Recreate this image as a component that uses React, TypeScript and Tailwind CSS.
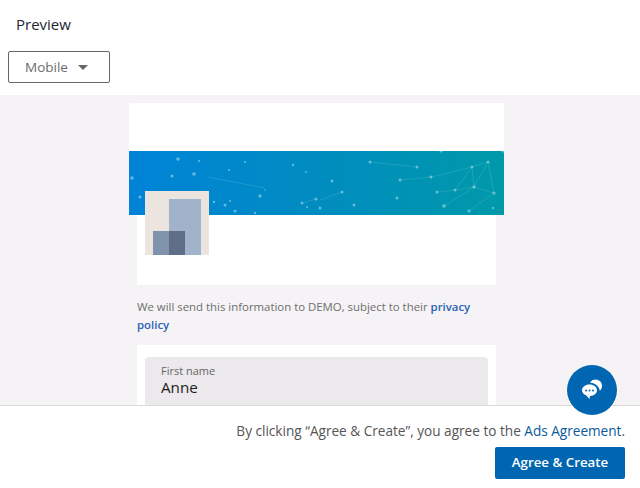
const dots: [number, number, number][] = [
  [3, 27, 1.8], [49, 8, 1.8], [43, 25, 1.6], [65, 23, 1.8], [11, 46, 1.6], [70, 10, 1.1], [116, 11, 1.1], [100, 19, 1.1], [131, 45, 1.7], [85, 51, 1.2],
  [96, 54, 1.5], [101, 50, 1], [106, 60, 1.6], [126, 62, 1.2], [173, 52, 1.5], [187, 48, 1.6], [191, 57, 1.5], [178, 56, 1.1], [164, 14, 1.2], [177, 21, 0.9],
  [136, 39, 0.8], [241, 11, 1.5], [288, 16, 1.5], [271, 29, 1.5], [302, 26, 1.5], [203, 30, 1.5], [213, 41, 1.5], [225, 54, 1.5], [268, 47, 1.5], [308, 41, 1.5],
  [326, 39, 1.5], [345, 36, 1.7], [343, 16, 1.5], [359, 11, 1.6], [365, 42, 1.6], [364, 57, 1.2], [340, 60, 1.6], [315, 55, 1.8], [312, 0, 1.5], [374, 0, 1.5],
];

const links = [
  'M79 26L136 37',
  'M241 11L288 16',
  'M271 29L302 26L343 16L359 11',
  'M191 49L213 41',
  'M308 41L326 39L345 36L365 42',
  'M315 55L345 36L359 11',
  'M340 60L365 42L359 11',
  'M326 39L343 16L345 36',
  'M173 52L187 48',
];

function Banner() {
  return (
    <svg width="375" height="64" viewBox="0 0 375 64" className="block">
      <defs>
        <linearGradient id="bannerFill" x1="0" y1="0" x2="1" y2="0">
          <stop offset="0" stopColor="#0083d8" />
          <stop offset="0.5" stopColor="#008cc0" />
          <stop offset="1" stopColor="#0099a9" />
        </linearGradient>
      </defs>
      <rect width="375" height="64" fill="url(#bannerFill)" />
      {links.map((d) => (
        <path key={d} d={d} fill="none" stroke="#7fd0dc" strokeOpacity="0.22" strokeWidth="1" />
      ))}
      {dots.map(([x, y, r]) => (
        <circle key={`${x}-${y}`} cx={x} cy={y} r={r} fill="#a5dbe8" fillOpacity="0.6" />
      ))}
    </svg>
  );
}

function CompanyLogo() {
  return (
    <svg width="64" height="64" viewBox="0 0 64 64" className="block">
      <rect width="64" height="64" fill="#ece4df" />
      <rect x="24" y="8" width="32" height="56" fill="#a0b3cb" />
      <rect x="8" y="40" width="32" height="24" fill="#7f93ad" />
      <rect x="24" y="40" width="16" height="24" fill="#5f6f87" />
    </svg>
  );
}

function ChatIcon() {
  return (
    <svg width="22" height="22" viewBox="0 0 22 22" fill="white">
      <path d="M9 3.500a6.500 6.500 0 0 1 12 3.500c0 2-.9 3.600-2.200 4.800-.4-3.800-3.800-7.600-9.800-8.300z" />
      <path d="M8.500 5.500c4.300 0 7.500 2.600 7.500 5.800s-3.200 5.700-7 5.700l-.6 3-3-3.600C2.500 15.500 1 13.500 1 11.300c0-3.200 3.200-5.800 7.500-5.800z" />
      <circle cx="5" cy="11.500" r="1" fill="#0066b2" />
      <circle cx="8.500" cy="11.500" r="1" fill="#0066b2" />
      <circle cx="12" cy="11.500" r="1" fill="#0066b2" />
    </svg>
  );
}

export default function App() {
  return (
    <div className="relative flex h-[488px] w-[640px] flex-col overflow-hidden bg-white font-['Open_Sans','Noto_Sans',sans-serif]">
      <header className="h-[95px] shrink-0 px-2">
        <h1 className="pl-2 pt-[14px] text-[15px] leading-[20px] font-medium text-[#1d2733]">Preview</h1>
        <button
          type="button"
          className="mt-[17px] flex h-8 w-[102px] items-center gap-[10px] rounded-[2px] border border-[#666666] pl-4 text-[13.5px] font-medium text-[#6b6b6b]"
        >
          Mobile
          <span className="h-0 w-0 border-x-[5px] border-t-[5px] border-x-transparent border-t-[#666666]" />
        </button>
      </header>

      <main className="flex min-h-0 flex-1 justify-center overflow-hidden bg-[#f5f3f5] pr-[7px] pt-2">
        <div className="w-[375px]">
          <div className="h-12 bg-white" />
          <Banner />
          <div className="mx-2 h-[70px] bg-white pl-2">
            <div className="relative -top-6 w-16">
              <CompanyLogo />
            </div>
          </div>
          <p className="mx-2 mt-[13px] text-[11.4px] leading-[18px] text-[#6e6e6e]">
            We will send this information to DEMO, subject to their{' '}
            <a className="font-semibold text-[#2a62b5]">privacy policy</a>
          </p>
          <div className="mx-2 mt-[11px] h-[200px] bg-white p-2 pt-3">
            <div className="h-[56px] rounded-[4px] bg-[#ebe9ec] pl-4 pt-[6px]">
              <div className="text-[11px] leading-[16px] text-[#666666]">First name</div>
              <div className="text-[15.2px] leading-[17px] text-[#1d1d1d]">Anne</div>
            </div>
          </div>
        </div>
      </main>

      <footer className="z-10 flex h-[83px] shrink-0 flex-col items-end border-t border-[#d9d9d9] bg-white pr-[15px] pt-[15px]">
        <p className="text-[13.6px] leading-[20px] text-[#555555]">
          By clicking “Agree &amp; Create”, you agree to the{' '}
          <a className="font-medium text-[#0a5a9c]">Ads Agreement</a>.
        </p>
        <button
          type="button"
          className="mt-[6px] h-8 w-[130px] rounded-[2px] bg-[#0066b2] text-[13.3px] font-semibold text-white"
        >
          Agree &amp; Create
        </button>
      </footer>

      <button
        type="button"
        className="absolute left-[567px] top-[365px] z-20 flex h-[50px] w-[50px] items-center justify-center rounded-full bg-[#0066b2]"
      >
        <ChatIcon />
      </button>
    </div>
  );
}
